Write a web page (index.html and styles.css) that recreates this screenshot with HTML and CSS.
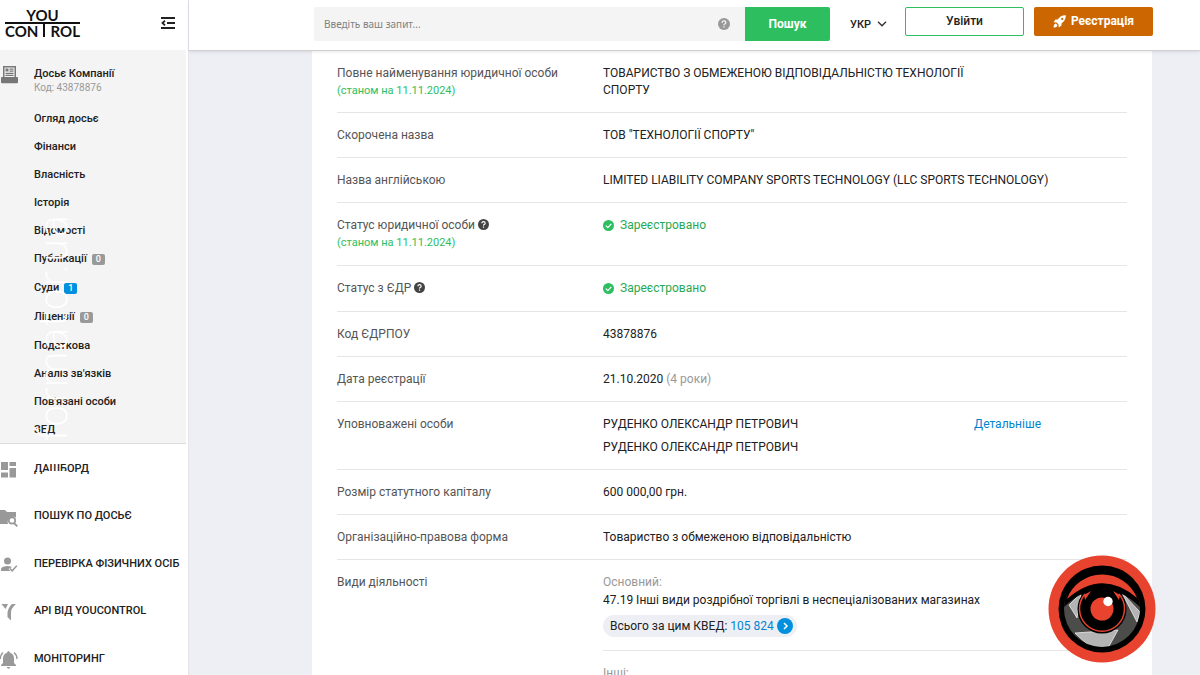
FILE: index.html
```html
<!DOCTYPE html>
<html lang="uk">
<head>
<meta charset="utf-8">
<meta name="viewport" content="width=device-width, initial-scale=1">
<title>YouControl — Досьє Компанії</title>
<link rel="stylesheet" href="styles.css">
</head>
<body>
<div class="app">
  <aside class="sidebar">
    <div class="brand">
      <a class="logo" href="#" aria-label="YouControl">
        <span class="logo-you">YOU</span>
        <span class="logo-control"><span>CON</span><span class="logo-t"></span><span>ROL</span></span>
      </a>
      <button class="collapse" type="button" aria-label="Згорнути меню">
        <svg width="14" height="12" viewBox="0 0 14 12" fill="none" stroke="#222" stroke-width="1.8"><path d="M0 1h14M6 6h8M0 11h14M4 3.6L1.5 6 4 8.400"/></svg>
      </button>
    </div>
    <nav class="dossier">
      <div class="dossier-head">
        <svg class="dossier-icon" width="17" height="18" viewBox="0 0 17 18"><path fill="#777" d="M2 0h13v11h-13z"/><path fill="#f4f4f4" d="M3.500 1.500h10V11h-10z"/><path fill="#777" d="M4.500 2.500h3v3h-3zM8.500 2.500h4v1.200h-4zM8.500 4.600h4v1.200h-4zM4.500 6.700h8v1.200h-8zM4.500 8.800h8V10h-8zM1 11h15q1 0 1 1V16q0 1.200-1 1.200H1Q0 17.200 0 16v-4q0-1 1-1z"/></svg>
        <div><a class="dossier-title" href="#">Досьє Компанії</a><div class="dossier-code">Код: 43878876</div></div>
      </div>
      <ul class="sub">
        <li><a href="#">Огляд досьє</a></li>
        <li><a href="#">Фінанси</a></li>
        <li><a href="#">Власність</a></li>
        <li><a href="#">Історія</a></li>
        <li><a href="#">Відомості</a></li>
        <li class="counted"><a href="#">Публікації</a><span class="badge">0</span></li>
        <li class="counted"><a href="#">Суди</a><span class="badge badge-blue">1</span></li>
        <li class="counted"><a href="#">Ліцензії</a><span class="badge">0</span></li>
        <li><a href="#">Податкова</a></li>
        <li><a href="#">Аналіз зв'язків</a></li>
        <li><a href="#">Пов'язані особи</a></li>
        <li><a href="#">ЗЕД</a></li>
      </ul>
    </nav>
    <nav>
      <ul class="menu">
        <li><a href="#"><svg width="18" height="18" viewBox="0 0 18 18" fill="#999"><path d="M1 1h7v8H1zM9.500 1H16v4H9.500zM9.500 7H16v9.500H9.500zM1 11.500h7v5H1z"/></svg>ДАШБОРД</a></li>
        <li><a href="#"><svg width="18" height="18" viewBox="0 0 18 18" fill="#999"><path d="M0 1h5l2 2h9v5.500a5.500 5.500 0 0 0-8 6.500H0z"/><circle cx="12" cy="11.500" r="3.200" fill="none" stroke="#999" stroke-width="1.700"/><path d="M14 14l3.300 3.300" stroke="#999" stroke-width="1.800"/></svg>ПОШУК ПО ДОСЬЄ</a></li>
        <li><a href="#"><svg width="18" height="18" viewBox="0 0 18 18" fill="#999"><circle cx="7.500" cy="5" r="3.500"/><path d="M1 15v-2q0-2.500 6-3 3 0 5 1L8.500 13l2 2z"/><path d="M10 12.500l2.200 2.300 4.600-5" fill="none" stroke="#999" stroke-width="1.500"/></svg>ПЕРЕВІРКА ФІЗИЧНИХ ОСІБ</a></li>
        <li><a href="#"><svg width="18" height="18" viewBox="0 0 18 18" fill="#999"><path d="M1.500 0H8L5.500 5zM12 0h4q-5.500 4.500-5 9.500v7L7.500 13V8.500Q8 4 12 0z"/></svg>API ВІД YOUCONTROL</a></li>
        <li><a href="#"><svg width="18" height="18" viewBox="0 0 18 18" fill="#999"><path d="M8.500 0q1.200 0 1.200 1.500Q14 3 14 7.500V12l2 2v1H1v-1l2-2V7.500Q3 3 7.300 1.500 7.300 0 8.500 0zM6.800 16h3.400q-.3 1.700-1.700 1.700T6.800 16z"/><path d="M3 1.500Q.3 4 .3 8M14 1.500Q17 4 17 8" fill="none" stroke="#999" stroke-width="1.400"/></svg>МОНІТОРИНГ</a></li>
      </ul>
    </nav>
    <div class="watermark" aria-hidden="true">informator.ua</div>
  </aside>

  <div class="page">
    <header class="topbar">
      <form class="search">
        <label class="search-box">
          <input type="text" aria-label="Пошук" placeholder="Введіть ваш запит...">
          <svg class="help" width="12" height="12" viewBox="0 0 12 12"><circle cx="6" cy="6" r="6" fill="#999"/><path d="M4.200 4.700q0-1.800 1.800-1.800t1.800 1.600q0 .9-1 1.500T6 7.300M6 8.200v1.400" fill="none" stroke="#f4f4f4" stroke-width="1.300"/></svg>
        </label>
        <button class="btn-search" type="submit">Пошук</button>
      </form>
      <button class="lang" type="button">УКР <svg width="10" height="6" viewBox="0 0 10 6" fill="none" stroke="#333" stroke-width="1.400"><path d="M1 .7l4 4 4-4"/></svg></button>
      <div class="auth">
        <button class="btn btn-login" type="button">Увійти</button>
        <button class="btn btn-register" type="button"><svg width="13" height="13" viewBox="0 0 13 13" fill="#fff"><path fill-rule="evenodd" d="M12.800.2q.3 5-4.300 8.200v2.200L5.800 12.400l-.3-3L3.600 7.500l-3-.3L2.400 4.500h2.200Q7.800-.1 12.800.2zM9.200 2.800a1.100 1.100 0 1 0 .1 0z"/><path d="M2.800 8.600L4.500 10.200Q4 12.300.5 12.600.600 9 2.800 8.600z"/></svg>Реєстрація</button>
      </div>
    </header>

    <main class="panel">
      <dl class="facts">
        <div class="row"><dt>Повне найменування юридичної особи<small>(станом на 11.11.2024)</small></dt><dd><p class="fullname">ТОВАРИСТВО З ОБМЕЖЕНОЮ ВІДПОВІДАЛЬНІСТЮ ТЕХНОЛОГІЇ СПОРТУ</p></dd></div>
        <div class="row"><dt>Скорочена назва</dt><dd>ТОВ "ТЕХНОЛОГІЇ СПОРТУ"</dd></div>
        <div class="row"><dt>Назва англійською</dt><dd>LIMITED LIABILITY COMPANY SPORTS TECHNOLOGY (LLC SPORTS TECHNOLOGY)</dd></div>
        <div class="row row-status"><dt>Статус юридичної особи <svg class="q" width="11" height="11" viewBox="0 0 12 12"><circle cx="6" cy="6" r="6" fill="#444"/><path d="M4.200 4.700q0-1.800 1.800-1.800t1.800 1.600q0 .9-1 1.500T6 7.300M6 8.200v1.400" fill="none" stroke="#fff" stroke-width="1.300"/></svg><small>(станом на 11.11.2024)</small></dt><dd class="ok"><svg width="11" height="11" viewBox="0 0 11 11"><circle cx="5.500" cy="5.500" r="5.500" fill="#2dbe60"/><path d="M2.800 5.600l2 2 3.500-3.700" fill="none" stroke="#fff" stroke-width="1.300"/></svg>Зареєстровано</dd></div>
        <div class="row row-status"><dt>Статус з ЄДР <svg class="q" width="11" height="11" viewBox="0 0 12 12"><circle cx="6" cy="6" r="6" fill="#444"/><path d="M4.200 4.700q0-1.800 1.800-1.800t1.800 1.600q0 .9-1 1.500T6 7.300M6 8.200v1.400" fill="none" stroke="#fff" stroke-width="1.300"/></svg></dt><dd class="ok"><svg width="11" height="11" viewBox="0 0 11 11"><circle cx="5.500" cy="5.500" r="5.500" fill="#2dbe60"/><path d="M2.800 5.600l2 2 3.500-3.700" fill="none" stroke="#fff" stroke-width="1.300"/></svg>Зареєстровано</dd></div>
        <div class="row"><dt>Код ЄДРПОУ</dt><dd>43878876</dd></div>
        <div class="row"><dt>Дата реєстрації</dt><dd>21.10.2020 <span class="muted">(4 роки)</span></dd></div>
        <div class="row"><dt>Уповноважені особи</dt><dd class="people"><div class="names"><span>РУДЕНКО ОЛЕКСАНДР ПЕТРОВИЧ</span><span>РУДЕНКО ОЛЕКСАНДР ПЕТРОВИЧ</span></div><a class="link" href="#">Детальніше</a></dd></div>
        <div class="row"><dt>Розмір статутного капіталу</dt><dd>600 000,00 грн.</dd></div>
        <div class="row"><dt>Організаційно-правова форма</dt><dd>Товариство з обмеженою відповідальністю</dd></div>
        <div class="row row-last"><dt>Види діяльності</dt><dd>
          <div class="muted">Основний:</div>
          <div class="kved">47.19 Інші види роздрібної торгівлі в неспеціалізованих магазинах</div>
          <a class="pill" href="#">Всього за цим КВЕД: <span class="link">105 824</span><svg width="16" height="16" viewBox="0 0 16 16"><circle cx="8" cy="8" r="8" fill="#0090dd"/><path d="M7 5l3 3-3 3" fill="none" stroke="#fff" stroke-width="1.500"/></svg></a>
          <div class="others muted">Інші:</div>
        </dd></div>
      </dl>
    </main>
  </div>

  <svg class="eye" width="108" height="108" viewBox="0 0 108 108">
    <defs><clipPath id="lens"><circle cx="54" cy="54" r="38"/></clipPath></defs>
    <circle cx="54" cy="54" r="53.500" fill="#e8432e"/>
    <circle cx="54" cy="54" r="43.500" fill="#000"/>
    <g clip-path="url(#lens)">
      <path fill="#4c4c4a" d="M10 40h88v64H10z"/>
      <path fill="#b4b4b4" stroke="#eee" stroke-width=".8" d="M21 50l12-12-4 25zM27 78l43-3-10 18-18-1zM74 38l18 19-3 10z"/>
      <path fill="#000" d="M10 58Q54 10 98 58V10H10z"/>
      <path fill="#e8432e" d="M19 44A37.500 37.500 0 0 1 89 43Q54 13 19 44z"/>
    </g>
    <circle cx="54" cy="54" r="24.500" fill="#000"/>
    <path fill="#e8432e" d="M36 40l7-4-6 9zM72 40l-7-4 6 9z"/>
    <path d="M37 39a22.500 22.500 0 1 0 34 0" fill="none" stroke="#e8432e" stroke-width="1.500"/>
    <circle cx="54" cy="54" r="11.500" fill="#e8432e"/>
    <circle cx="60" cy="46.500" r="4.700" fill="#fff"/>
  </svg>
</div>
</body>
</html>
```
FILE: styles.css
```css
* { box-sizing: border-box; }
body {
  margin: 0;
  background: #eeeff5;
  color: #212121;
  font: 12px/17px Roboto, "Liberation Sans", sans-serif;
}
ul, dl, dd, p { margin: 0; padding: 0; }
ul { list-style: none; }
a { color: inherit; text-decoration: none; }
button { font: inherit; color: inherit; border: 0; padding: 0; background: none; cursor: pointer; }
svg { flex: none; }

.app { display: flex; height: 100vh; overflow: hidden; }

.sidebar {
  position: relative;
  flex: none;
  width: 189px;
  background: #fff;
  border-right: 1px solid #e4e5ea;
  font-size: 11px;
  overflow: hidden;
}
.brand { display: flex; justify-content: space-between; align-items: center; height: 50px; padding: 0 13px 4px 5px; }
.logo { font: 700 15px/14px Lato, sans-serif; color: #111; width: 75px; }
.logo-you { display: block; text-align: center; border-bottom: 2px solid #111; }
.logo-control { display: flex; justify-content: space-between; }
.logo-t { width: 2px; height: 13px; background: #111; }
.collapse { display: flex; }

.dossier { background: #f4f4f4; border-bottom: 1px solid #ddd; margin-right: 2px; padding: 15px 0 0; }
.dossier-head { display: flex; gap: 16px; padding-left: 1px; }
.dossier-icon { margin-top: 1px; }
.dossier-title { display: block; font-weight: 500; }
.dossier-code { font-size: 10px; line-height: 12px; color: #999; }
.sub { padding: 10px 0 0 34px; font-weight: 500; }
.sub li { display: flex; align-items: center; gap: 5px; height: 28px; }
.sub .counted { height: 29px; }
.badge { padding: 0 4px; border-radius: 2px; background: #999; color: #fff; font-size: 9px; line-height: 11px; margin-top: 1px; }
.badge-blue { background: #0090dd; }

.menu { font-weight: 500; }
.menu li { display: flex; align-items: center; height: 48px; }
.menu li:nth-child(even) { height: 47px; }
.menu a { display: flex; align-items: center; gap: 16px; white-space: nowrap; }
.menu svg { margin-top: 4px; }

.watermark {
  position: absolute;
  left: 28px;
  top: 214px;
  color: #fff;
  font: 200 39px/52px "DejaVu Sans Light", "DejaVu Sans", sans-serif;
  writing-mode: vertical-rl;
  transform: rotate(180deg);
  pointer-events: none;
}

.page { flex: 1; min-width: 0; }
.topbar {
  position: relative;
  display: flex;
  align-items: flex-start;
  height: 51px;
  padding: 7px 47px 0 125px;
  background: #fff;
  border-bottom: 1px solid #d0d0d3;
  box-shadow: 0 1px 3px rgba(0, 0, 0, .1);
}
.search { display: flex; flex: 1; height: 34px; }
.search-box { display: flex; flex: 1; align-items: center; padding: 0 15px 0 10px; background: #f4f4f4; border-radius: 2px 0 0 2px; }
.search-box input { flex: 1; min-width: 0; border: 0; padding: 0; background: none; outline: 0; font: 10px/16px "Noto Sans", sans-serif; }
.search-box input::placeholder { color: #808080; opacity: 1; }
.btn-search { width: 85px; background: #2dbe60; color: #fff; border-radius: 0 2px 2px 0; font-size: 12px; font-weight: 700; }
.lang { display: flex; align-items: center; gap: 6px; height: 34px; margin: 0 18px 0 20px; font-size: 11px; font-weight: 500; }
.auth { display: flex; gap: 10px; }
.btn { display: flex; align-items: center; justify-content: center; gap: 5px; width: 119px; height: 29px; border-radius: 2px; font-weight: 700; }
.btn-login { border: 1px solid #2dbe60; font-weight: 500; }
.btn-register { background: #cc6600; color: #fff; }

.panel { margin: 0 48px 0 123px; padding: 0 25px; background: #fff; }
.row { display: flex; padding: 14px 0 13px; border-bottom: 1px solid #e6e6e6; }
.row-status { padding-bottom: 14px; }
.row-last { border-bottom: 0; }
dt { flex: none; width: 266px; color: #555; }
dt small { display: block; font-size: 11px; color: #2dbe60; }
dd { flex: 1; }
.q { vertical-align: -1px; }
.fullname { max-width: 371px; }
.ok { display: flex; align-items: center; align-self: flex-start; gap: 6px; color: #27a853; }
.muted { color: #999; }
.link { color: #0085d0; }
.people { display: flex; justify-content: space-between; padding-right: 86px; }
.names { display: grid; gap: 6px; }
.kved { margin: 1px 0 6px; }
.pill { display: inline-flex; align-items: center; gap: 3px; height: 22px; padding: 0 4px 0 7px; border-radius: 11px; background: #eeeff5; }
.others { margin-top: 13px; padding-top: 14px; border-top: 1px solid #e6e6e6; }

.eye { position: absolute; right: 44px; bottom: 12px; }
```
